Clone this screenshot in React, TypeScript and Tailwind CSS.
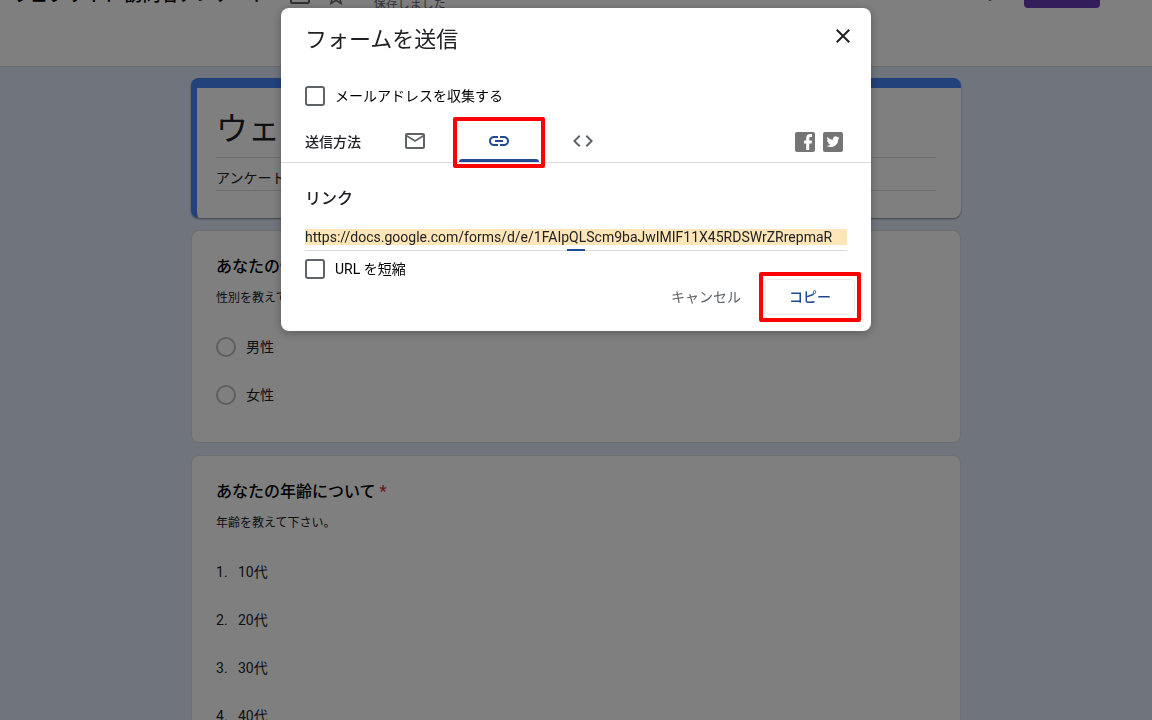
import type { ReactNode } from "react";

const ICONS = {
  mail: "M22 6c0-1.1-.9-2-2-2H4c-1.1 0-2 .9-2 2v12c0 1.1.9 2 2 2h16c1.1 0 2-.9 2-2V6zm-2 0l-8 5-8-5h16zm0 12H4V8l8 5 8-5v10z",
  link: "M3.9 12c0-1.71 1.39-3.1 3.1-3.1h4V7H7c-2.76 0-5 2.24-5 5s2.24 5 5 5h4v-1.9H7c-1.71 0-3.1-1.39-3.1-3.1zM8 13h8v-2H8v2zm9-6h-4v1.9h4c1.71 0 3.1 1.39 3.1 3.1s-1.39 3.1-3.1 3.1h-4V17h4c2.76 0 5-2.24 5-5s-2.24-5-5-5z",
  code: "M9.4 16.6L4.8 12l4.6-4.6L8 6l-6 6 6 6 1.4-1.4zm5.2 0l4.6-4.6-4.6-4.6L16 6l6 6-6 6-1.4-1.4z",
  close: "M19 6.41L17.59 5 12 10.59 6.41 5 5 6.41 10.59 12 5 17.59 6.41 19 12 13.41 17.59 19 19 17.59 13.41 12z",
  folder: "M20 6h-8l-2-2H4c-1.1 0-2 .9-2 2v12c0 1.1.9 2 2 2h16c1.1 0 2-.9 2-2V8c0-1.1-.9-2-2-2zm0 12H4V6h5.17l2 2H20v10z",
  star: "M22 9.24l-7.19-.62L12 2 9.19 8.63 2 9.24l5.46 4.73L5.82 21 12 17.27 18.18 21l-1.63-7.03L22 9.24zM12 15.4l-3.76 2.27 1-4.28-3.32-2.88 4.38-.38L12 6.1l1.71 4.04 4.38.38-3.32 2.88 1 4.28L12 15.4z",
  more: "M12 8c1.1 0 2-.9 2-2s-.9-2-2-2-2 .9-2 2 .9 2 2 2zm0 2c-1.1 0-2 .9-2 2s.9 2 2 2 2-.9 2-2-.9-2-2-2zm0 6c-1.1 0-2 .9-2 2s.9 2 2 2 2-.9 2-2-.9-2-2-2z",
};

const FORM_URL =
  "https://docs.google.com/forms/d/e/1FAIpQLScm9baJwIMIF11X45RDSWrZRrepmaR";

function Icon({ name }: { name: keyof typeof ICONS }) {
  return (
    <svg viewBox="0 0 24 24" className="size-6 shrink-0 fill-current" aria-hidden="true">
      <path d={ICONS[name]} />
    </svg>
  );
}

function TopBar() {
  return (
    <header className="h-[67px] border-b border-[#dadce0] bg-white">
      <div className="flex h-3 items-end overflow-hidden pr-[52px] pl-3 text-[#5f6368]">
        <span className="pb-[5px] text-lg/6 font-medium whitespace-nowrap text-black">
          ウェブサイト 訪問者アンケート
        </span>
        <button aria-label="フォルダに移動" className="ml-5 pb-1">
          <Icon name="folder" />
        </button>
        <button aria-label="スターを付ける" className="ml-3 pb-1">
          <Icon name="star" />
        </button>
        <span className="ml-[26px] text-xs/[15px] whitespace-nowrap">保存しました</span>
        <button aria-label="その他" className="ml-auto pb-[7px]">
          <Icon name="more" />
        </button>
        <div className="pb-1 pl-[22px]">
          <button aria-label="送信" className="block h-9 w-[76px] rounded bg-[#673ab7]" />
        </div>
      </div>
    </header>
  );
}

function QuestionCard({
  title,
  note,
  children,
}: {
  title: string;
  note: string;
  children: ReactNode;
}) {
  return (
    <section className="rounded-lg border border-[#dadce0] bg-white px-6 pt-6 pb-[23px] text-[#202124]">
      <h2 className="text-base/6 font-medium text-black">
        {title} <span className="text-[#d93025]">*</span>
      </h2>
      <p className="mt-[9px] text-xs/5">{note}</p>
      <div className="mt-[15px]">{children}</div>
    </section>
  );
}

function FormPage() {
  return (
    <main className="mx-auto flex max-w-[770px] flex-col gap-3 pt-[11px]">
      <section className="rounded-lg border-t-10 border-l-6 border-[#4285f4] bg-white pr-[25px] pb-[27px] pl-[19px] shadow-[0_1px_2px_rgba(60,64,67,0.6)]">
        <input
          aria-label="フォームのタイトル"
          readOnly
          value="ウェブサイト訪問者アンケート"
          className="block h-[70px] w-full border-b border-[#dadce0] pt-1.5 text-[32px] text-[#202124]"
        />
        <input
          aria-label="フォームの説明"
          readOnly
          value="アンケート"
          className="block h-[33px] w-full border-b border-[#dadce0] pt-1.5 text-sm text-[#202124]"
        />
      </section>
      <QuestionCard title="あなたの性別について" note="性別を教えて下さい。">
        {["男性", "女性"].map((option) => (
          <label key={option} className="flex h-12 items-center gap-2.5 text-sm">
            <input
              type="radio"
              name="gender"
              className="size-5 appearance-none rounded-full border-2 border-[#bdbdbd]"
            />
            {option}
          </label>
        ))}
      </QuestionCard>
      <QuestionCard title="あなたの年齢について" note="年齢を教えて下さい。">
        <ol>
          {["10代", "20代", "30代", "40代"].map((option, i) => (
            <li key={option} className="flex h-12 items-center text-sm">
              <span className="w-[22px]">{i + 1}.</span>
              {option}
            </li>
          ))}
        </ol>
      </QuestionCard>
    </main>
  );
}

function Check({ label }: { label: string }) {
  return (
    <label className="flex h-5 items-center gap-2.5 text-sm text-black">
      <input
        type="checkbox"
        className="size-5 appearance-none rounded-[3px] border-2 border-[#5f6368]"
      />
      {label}
    </label>
  );
}

function Tab({
  name,
  label,
  selected = false,
}: {
  name: keyof typeof ICONS;
  label: string;
  selected?: boolean;
}) {
  return (
    <button
      role="tab"
      aria-label={label}
      aria-selected={selected}
      className={
        selected
          ? "relative flex h-[42px] w-[84px] items-center justify-center text-[#204a94]"
          : "flex h-[42px] w-[84px] items-center justify-center text-[#5f6368]"
      }
    >
      <Icon name={name} />
      {selected && (
        <>
          <span className="absolute inset-x-0.5 bottom-0 h-[3px] rounded-t-[3px] bg-[#204a94]" />
          <span className="pointer-events-none absolute -inset-x-1 -top-[3px] -bottom-1.5 rounded-xs border-4 border-[#ff0000]" />
        </>
      )}
    </button>
  );
}

function SendDialog() {
  return (
    <div
      role="dialog"
      aria-modal="true"
      aria-labelledby="send-title"
      className="mx-auto mt-2 max-w-[590px] rounded-lg bg-white pb-4 text-[#202124] shadow-[0_2px_10px_rgba(0,0,0,0.3)]"
    >
      <div className="flex h-[46px] items-end justify-between pr-[5px] pl-6">
        <h1 id="send-title" className="text-[22px]/[28px]">
          フォームを送信
        </h1>
        <button
          aria-label="閉じる"
          className="flex size-[46px] items-center justify-center self-center rounded-full pt-2.5"
        >
          <Icon name="close" />
        </button>
      </div>

      <div className="mt-8 px-6">
        <Check label="メールアドレスを収集する" />
      </div>

      <div className="mt-3.5 flex h-[43px] items-center border-b border-[#dadce0] px-6">
        <span className="w-[68px] pt-0.5 text-sm font-medium">送信方法</span>
        <div role="tablist" className="flex">
          <Tab name="mail" label="メール" />
          <Tab name="link" label="リンク" selected />
          <Tab name="code" label="HTML を埋め込む" />
        </div>
        <div className="mr-1 ml-auto flex gap-2 pt-0.5">
          <button aria-label="Facebook で共有">
            <svg viewBox="0 0 20 20" className="size-5" aria-hidden="true">
              <rect width="20" height="20" rx="2" fill="#757575" />
              <path
                fill="#fff"
                d="M11.2 18v-6.6H9V8.5h2.2V6.2c0-2.6 1.4-4.2 3.9-4.2H17v3h-1.4c-1 0-1.4.5-1.4 1.4v2.1H17l-.4 2.9h-2.4V18z"
              />
            </svg>
          </button>
          <button aria-label="Twitter で共有">
            <svg viewBox="0 0 20 20" className="size-5" aria-hidden="true">
              <rect width="20" height="20" rx="2" fill="#757575" />
              <path
                fill="#fff"
                transform="translate(3.6 3.2) scale(0.54)"
                d="M23.953 4.57a10 10 0 01-2.825.775 4.958 4.958 0 002.163-2.723c-.951.555-2.005.959-3.127 1.184a4.92 4.92 0 00-8.384 4.482C7.69 8.095 4.067 6.13 1.64 3.162a4.822 4.822 0 00-.666 2.475c0 1.71.87 3.213 2.188 4.096a4.904 4.904 0 01-2.228-.616v.06a4.923 4.923 0 003.946 4.827 4.996 4.996 0 01-2.212.085 4.936 4.936 0 004.604 3.417 9.867 9.867 0 01-6.102 2.105c-.39 0-.779-.023-1.17-.067a13.995 13.995 0 007.557 2.209c9.053 0 13.998-7.496 13.998-13.985 0-.21 0-.42-.015-.63A9.935 9.935 0 0024 4.59z"
              />
            </svg>
          </button>
        </div>
      </div>

      <div className="px-6 pt-6">
        <label htmlFor="form-url" className="block text-base/6 font-medium">
          リンク
        </label>
        <div className="relative mt-[18px] border-b border-[#dadce0] pb-[5px]">
          <input
            id="form-url"
            readOnly
            value={FORM_URL}
            className="block h-4 w-full bg-[#fee6b8] text-sm/4"
          />
          <span className="absolute inset-x-0 -bottom-px mx-auto h-0.5 w-[18px] bg-[#204a94]" />
        </div>
        <div className="mt-2">
          <Check label="URL を短縮" />
        </div>
      </div>

      <div className="flex justify-end gap-2 pr-4 text-sm">
        <button className="h-9 px-4 text-[#5f6368]">キャンセル</button>
        <button className="relative h-9 rounded border border-[#e8eaed] px-[23px] font-medium text-[#204a94]">
          コピー
          <span className="pointer-events-none absolute -inset-x-[7px] -inset-y-2 rounded-xs border-4 border-[#ff0000]" />
        </button>
      </div>
    </div>
  );
}

export default function App() {
  return (
    <div className="h-screen overflow-hidden bg-[#e1e9fb] font-['Roboto','Noto_Sans_CJK_JP',sans-serif]">
      <TopBar />
      <FormPage />
      <div className="fixed inset-0 overflow-hidden bg-black/50">
        <SendDialog />
      </div>
    </div>
  );
}
